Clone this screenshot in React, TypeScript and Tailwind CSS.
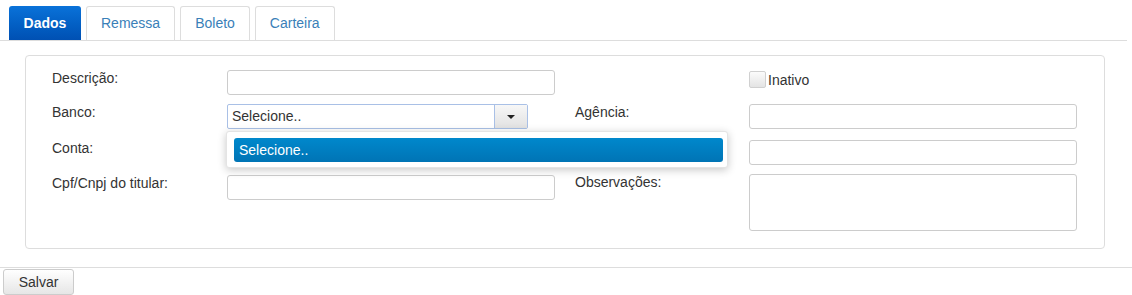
import React from 'react';

const Tab: React.FC<{ label: string; active?: boolean }> = ({ label, active }) => {
    if (active) {
        return (
            <div className="h-[34px] w-[72px] flex items-center justify-center rounded-t-[3px] bg-gradient-to-b from-[#0a72d9] to-[#0050b3] text-white font-bold text-[14px]">
                {label}
            </div>
        );
    }
    return (
        <div className="h-[34px] px-[14px] flex items-center justify-center rounded-t-[3px] border border-b-0 border-[#dddddd] text-[#3a7fb8] text-[14px] bg-white">
            {label}
        </div>
    );
};

const TextInput: React.FC<{ className?: string }> = ({ className = 'h-[25px]' }) => (
    <div className={`w-[328px] shrink-0 border border-[#cccccc] rounded-[3px] bg-white ${className}`} />
);

const Label: React.FC<{ text: string; w: string }> = ({ text, w }) => (
    <div className={`${w} text-[14px] leading-[16px] text-[#333333] shrink-0`}>{text}</div>
);

export default function App() {
    return (
        <div className="w-[1132px] h-[295px] bg-white font-['Liberation_Sans',Arial,sans-serif] text-[#333333] overflow-hidden">
            <div className="flex gap-[5px] pt-[6px] pl-[9px] mr-[5px] border-b border-[#dddddd]">
                <Tab label="Dados" active />
                <Tab label="Remessa" />
                <Tab label="Boleto" />
                <Tab label="Carteira" />
            </div>

            <div className="mt-[14px] ml-[25px] w-[1080px] h-[194px] border border-[#dddddd] rounded-[4px] pt-[14px] pl-[26px]">
                <div className="flex">
                    {/* left column */}
                    <div className="w-[523px] shrink-0 flex flex-col">
                        <div className="flex h-[25px]">
                            <Label text="Descrição:" w="w-[175px]" />
                            <TextInput />
                        </div>
                        <div className="flex h-[25px] mt-[9px]">
                            <Label text="Banco:" w="w-[175px]" />
                            <div className="relative">
                                <div className="w-[301px] h-[25px] flex border border-[#a9c0e6] rounded-[2px] bg-white">
                                    <div className="flex-1 pl-[4px] flex items-center text-[14px] text-[#333333]">Selecione..</div>
                                    <div className="w-[33px] h-full border-l border-[#a9c0e6] bg-gradient-to-b from-[#f7f7f7] to-[#e2e2e2] flex items-center justify-center">
                                        <div className="w-0 h-0 border-l-[4px] border-r-[4px] border-t-[4px] border-l-transparent border-r-transparent border-t-[#222222]" />
                                    </div>
                                </div>
                                <div className="absolute left-[-1px] top-[27px] w-[502px] h-[37px] bg-white rounded-[3px] border border-[#e4e4e4] shadow-[0_2px_8px_rgba(0,0,0,0.22)] z-10 pl-[7px] pr-[4px] pt-[6px]">
                                    <div className="h-[24px] rounded-[3px] bg-gradient-to-b from-[#0088cc] to-[#0074b5] text-white text-[14px] flex items-center pl-[5px]">
                                        Selecione..
                                    </div>
                                </div>
                            </div>
                        </div>
                        <div className="flex h-[25px] mt-[11px]">
                            <Label text="Conta:" w="w-[175px]" />
                            <TextInput />
                        </div>
                        <div className="flex h-[25px] mt-[10px]">
                            <Label text="Cpf/Cnpj do titular:" w="w-[175px]" />
                            <TextInput />
                        </div>
                    </div>

                    {/* right column */}
                    <div className="flex flex-col">
                        <div className="flex h-[25px]">
                            <div className="w-[174px] shrink-0" />
                            <div className="flex items-start pt-[1px]">
                                <div className="w-[17px] h-[17px] border border-[#d0d0d0] rounded-[2px] bg-gradient-to-b from-[#fbfbfb] to-[#e4e4e4]" />
                                <span className="ml-[2px] text-[14px] text-[#333333] leading-[20px] mt-[-1px]">Inativo</span>
                            </div>
                        </div>
                        <div className="flex h-[25px] mt-[9px]">
                            <Label text="Agência:" w="w-[174px]" />
                            <TextInput />
                        </div>
                        <div className="flex h-[25px] mt-[11px]">
                            <div className="w-[174px] shrink-0" />
                            <TextInput />
                        </div>
                        <div className="flex mt-[9px]">
                            <Label text="Observações:" w="w-[174px]" />
                            <TextInput className="h-[57px]" />
                        </div>
                    </div>
                </div>
            </div>

            <div className="mt-[18px] border-t border-[#dddddd] pt-[1px] pl-[3px]">
                <div className="w-[71px] h-[26px] border border-[#cccccc] rounded-[3px] bg-gradient-to-b from-[#ffffff] to-[#e6e6e6] flex items-center justify-center text-[14px] text-[#333333]">
                    Salvar
                </div>
            </div>
        </div>
    );
}
